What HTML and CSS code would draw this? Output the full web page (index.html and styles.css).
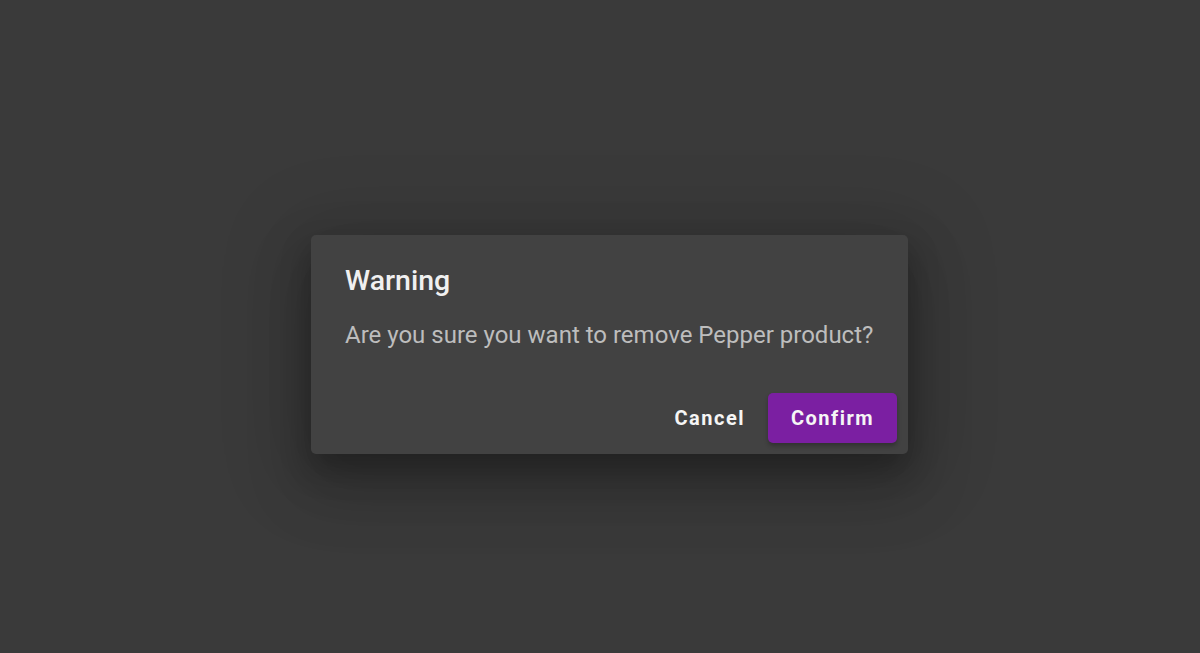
FILE: index.html
```html
<!DOCTYPE html>
<html lang="en">
<head>
    <meta charset="UTF-8">
    <meta name="viewport" content="width=device-width, initial-scale=1.0">
    <title>Warning</title>
    <link rel="stylesheet" href="styles.css">
</head>
<body>

    <div class="backdrop">
        <div class="dialog">
            <h2 class="dialog-title">Warning</h2>
            <p class="dialog-text">Are you sure you want to remove Pepper product?</p>
            <div class="dialog-actions">
                <button class="btn">Cancel</button>
                <button class="btn btn-primary">Confirm</button>
            </div>
        </div>
    </div>

</body>
</html>
```

FILE: styles.css
```css
* {
    margin: 0;
    padding: 0;
    box-sizing: border-box;
    font-family: 'Roboto', 'Liberation Sans', sans-serif;
}

body {
    height: 100vh;
    background-color: #3a3a3a;
}

.backdrop {
    display: flex;
    justify-content: center;
    align-items: center;
    width: 100%;
    height: 100%;
    padding-left: 19px;
    padding-top: 36px;
}

.dialog {
    width: 597px;
    height: 219px;
    background-color: #424242;
    border-radius: 5px;
    padding: 0 11px 11px 34px;
    display: flex;
    flex-direction: column;
    box-shadow: 0 15px 30px rgba(0, 0, 0, 0.25),
        0 30px 60px 10px rgba(0, 0, 0, 0.14),
        0 10px 80px 20px rgba(0, 0, 0, 0.12);
}

.dialog-title {
    font-size: 28.5px;
    font-weight: 500;
    color: #f0f0f0;
    margin-top: 29px;
    line-height: 34px;
}

.dialog-text {
    font-size: 24px;
    color: #bdbdbd;
    margin-top: 22px;
    line-height: 30px;
}

.dialog-actions {
    display: flex;
    justify-content: flex-end;
    align-items: center;
    gap: 11px;
    margin-top: auto;
}

.btn {
    height: 50px;
    padding: 0 12px;
    border: none;
    border-radius: 5px;
    background: none;
    color: #f5f5f5;
    font-size: 20px;
    font-weight: 700;
    letter-spacing: 1.5px;
    cursor: pointer;
}

.btn-primary {
    background-color: #7b1fa2;
    width: 129px;
    box-shadow: 0 3px 4px rgba(0, 0, 0, 0.25);
}
```
